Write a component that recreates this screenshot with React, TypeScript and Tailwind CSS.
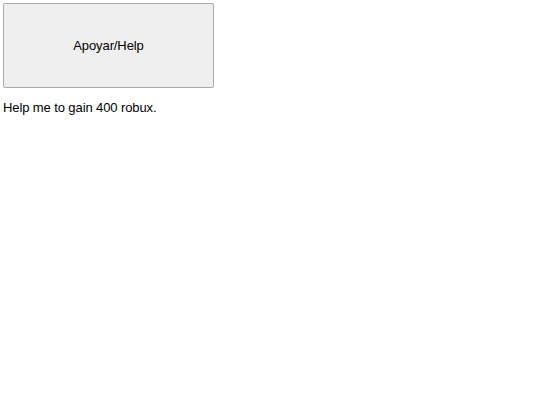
import React from 'react';

const App = () => {
    return (
        <div className="p-[3px] font-['Liberation_Sans',Arial,sans-serif] text-[13px] text-black">
            <button
                className="block w-[211px] h-[85px] bg-[#efefef] border border-[#a9a9a9] rounded-[2px] text-[13px] text-black tracking-[-0.1px]">
                Apoyar/Help
            </button>
            <p className="mt-[12px] leading-[15px] tracking-[-0.1px]">Help me to gain 400 robux.</p>
        </div>
    );
};

export default App;
